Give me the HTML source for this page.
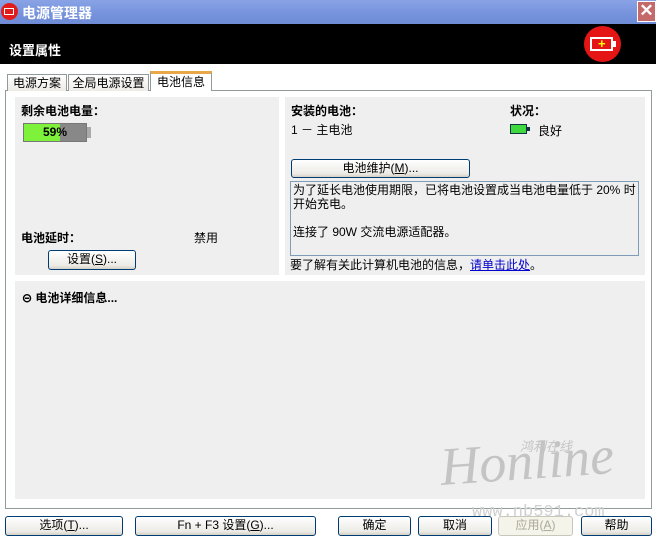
<!DOCTYPE html>
<html><head><meta charset="utf-8"><style>
*{margin:0;padding:0;box-sizing:border-box}
body{width:656px;height:539px;background:#fff;position:relative;overflow:hidden;font-family:"Liberation Sans","Noto Sans CJK SC","WenQuanYi Zen Hei",sans-serif;font-size:12px;color:#000}
.a{position:absolute}
.btn{position:absolute;border:1px solid #003c74;border-radius:3px;background:linear-gradient(#fff,#ecebe6 80%,#d6d0c5);text-align:center;font-size:12px;line-height:17px}
.box{position:absolute;background:#efefef}
</style></head><body>
<div class="a" style="left:0;top:0;width:656px;height:24px;background:linear-gradient(#8aa3e6,#7592dc 60%,#6f8bd6)"></div>
<div class="a" style="left:1px;top:3px;width:17px;height:17px;border-radius:50%;background:#e31b1b"></div>
<div class="a" style="left:4px;top:8px;width:10px;height:7px;border:1.5px solid #fff"></div>
<div class="a" style="left:22px;top:3px;color:#fff;font-size:14px;font-weight:bold">电源管理器</div>
<div class="a" style="left:637px;top:1px;width:19px;height:21px;background:#c46a6a;border:1px solid #fff;color:#fff;font-size:17px;line-height:18px;text-align:center;font-weight:bold">✕</div>
<div class="a" style="left:0;top:24px;width:656px;height:40px;background:#000"></div>
<div class="a" style="left:9px;top:40px;color:#fff;font-size:13px;font-weight:bold">设置属性</div>
<div class="a" style="left:584px;top:26px;width:37px;height:36px;border-radius:50%;background:#e51515"></div>
<div class="a" style="left:590px;top:37px;width:23px;height:14px;border:2px solid #fff"></div>
<div class="a" style="left:613px;top:41px;width:3px;height:6px;background:#fff"></div>
<div class="a" style="left:598px;top:37px;color:#ff0;font-size:13px;font-weight:bold;line-height:14px">+</div>
<div class="a" style="left:5px;top:90px;width:647px;height:419px;border:1px solid #919b9c;background:#fff"></div>
<div class="a" style="left:7px;top:74px;width:60px;height:17px;border:1px solid #919b9c;border-bottom:none;background:linear-gradient(#fff,#ecebe6);font-size:12px;text-align:center;line-height:16px">电源方案</div>
<div class="a" style="left:68px;top:74px;width:81px;height:17px;border:1px solid #919b9c;border-bottom:none;background:linear-gradient(#fff,#ecebe6);font-size:12px;text-align:center;line-height:16px">全局电源设置</div>
<div class="a" style="left:150px;top:71px;width:62px;height:20px;border:1px solid #919b9c;border-top:3px solid #e8a84a;border-bottom:none;background:#fff;font-size:12px;text-align:center;line-height:16px">电池信息</div>
<div class="box" style="left:15px;top:97px;width:264px;height:178px"></div>
<div class="a" style="left:21px;top:102px;font-weight:bold;font-size:12px">剩余电池电量：</div>
<div class="a" style="left:23px;top:123px;width:64px;height:19px;background:#888;border:1px solid #777"></div>
<div class="a" style="left:24px;top:124px;width:36px;height:17px;background:#7ef13a"></div>
<div class="a" style="left:87px;top:127px;width:4px;height:11px;background:#aaa"></div>
<div class="a" style="left:43px;top:125px;font-weight:bold">59%</div>
<div class="a" style="left:21px;top:229px;font-weight:bold">电池延时：</div>
<div class="a" style="left:194px;top:229px">禁用</div>
<div class="btn" style="left:48px;top:250px;width:88px;height:20px">设置(<u>S</u>)...</div>
<div class="box" style="left:285px;top:97px;width:360px;height:178px"></div>
<div class="a" style="left:291px;top:102px;font-weight:bold">安装的电池：</div>
<div class="a" style="left:291px;top:121px">1 － 主电池</div>
<div class="a" style="left:510px;top:102px;font-weight:bold">状况：</div>
<div class="a" style="left:510px;top:124px;width:17px;height:10px;background:#3fd93f;border:1px solid #134;"></div>
<div class="a" style="left:527px;top:127px;width:3px;height:4px;background:#134"></div>
<div class="a" style="left:538px;top:122px">良好</div>
<div class="btn" style="left:291px;top:159px;width:179px;height:19px">电池维护(<u>M</u>)...</div>
<div class="a" style="left:290px;top:181px;width:349px;height:75px;border:1px solid #7f9db9;background:#efefef;padding:1px 2px;line-height:14px">为了延长电池使用期限，已将电池设置成当电池电量低于 20% 时开始充电。<br><br>连接了 90W 交流电源适配器。</div>
<div class="a" style="left:290px;top:256px">要了解有关此计算机电池的信息，<span style="color:#00c;text-decoration:underline">请单击此处</span>。</div>
<div class="box" style="left:15px;top:281px;width:630px;height:218px"></div>
<div class="a" style="left:22px;top:289px;font-weight:bold">⊝ 电池详细信息...</div>
<div class="a" style="left:440px;top:430px;color:#c4c4c4;font-family:'Liberation Serif',serif;font-style:italic;font-size:54px;transform:rotate(-4deg)">Honline</div>
<div class="a" style="left:520px;top:436px;color:#c4c4c4;font-size:13px;font-style:italic">鸿利在线</div>
<div class="a" style="left:472px;top:503px;color:#d0d0d0;font-size:17px;font-family:'Liberation Mono',monospace">www.nb591.com</div>
<div class="btn" style="left:5px;top:516px;width:118px;height:20px">选项(<u>T</u>)...</div>
<div class="btn" style="left:135px;top:516px;width:181px;height:20px">Fn + F3 设置(<u>G</u>)...</div>
<div class="btn" style="left:338px;top:516px;width:73px;height:20px">确定</div>
<div class="btn" style="left:418px;top:516px;width:74px;height:20px">取消</div>
<div class="btn" style="left:498px;top:516px;width:75px;height:20px;border-color:#c9c7ba;color:#aca899;background:#f5f4ea">应用(<u>A</u>)</div>
<div class="btn" style="left:581px;top:516px;width:71px;height:20px">帮助</div>
</body></html>
